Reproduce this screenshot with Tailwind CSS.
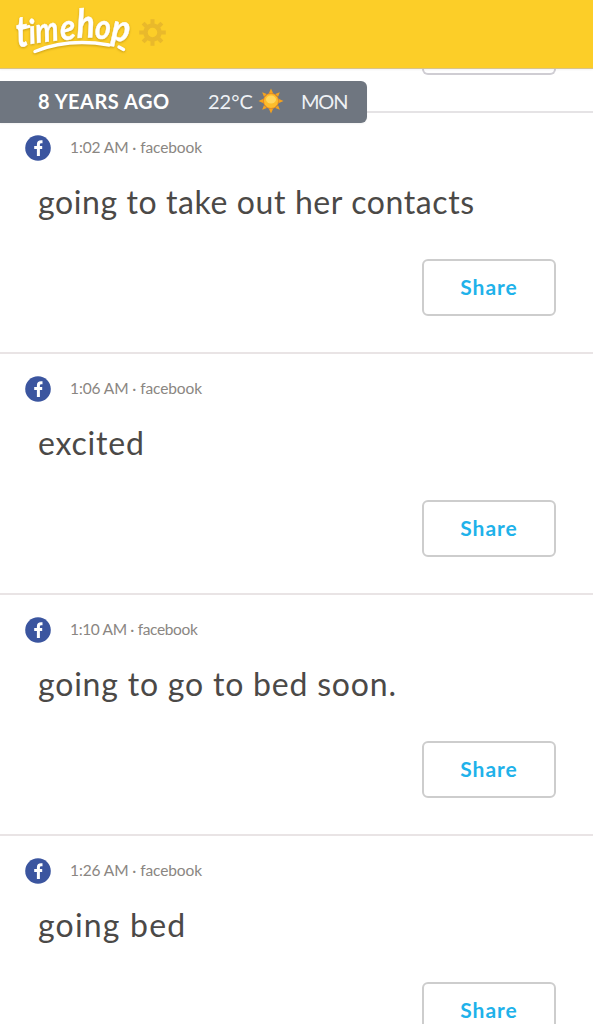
<!doctype html>
<html lang="en">

<head>
  <meta charset="UTF-8" />
  <meta name="viewport" content="width=device-width, initial-scale=1.0" />
  <title>Timehop</title>
  <script src="https://cdn.jsdelivr.net/npm/@tailwindcss/browser@4"></script>
</head>

<body class="bg-white font-['Lato',sans-serif] h-screen overflow-hidden">
  <!-- shared icons -->
  <svg class="hidden">
    <symbol id="fb" viewBox="0 0 26 26">
      <circle cx="13" cy="13" r="12.8" fill="#3b559f" />
      <path d="M17.500 6.700h-1.400c-1.900 0-2.700 1-2.700 2.700V21M9.200 12.600h8" fill="none" stroke="#fff" stroke-width="3" />
    </symbol>
  </svg>

  <header class="relative z-10 h-[69px] bg-[#fcce28] border-b border-[#d9c389] shadow-xs">
    <svg class="block" width="180" height="68" viewBox="0 0 180 68">
      <g class="drop-shadow-[0_1px_1px_rgba(150,110,0,0.5)]">
        <g font-size="32" font-weight="700" font-style="italic" fill="#fff" stroke="#fff" stroke-width=".4">
          <text transform="translate(17.500 47) rotate(-6) scale(1 1.350)">t</text>
          <text transform="translate(30 44) rotate(-7) scale(.9 1.050)">i</text>
          <text transform="translate(36.500 43) rotate(-7) scale(.92 1.080)">m</text>
          <text transform="translate(61 40.500) rotate(-6) scale(1 1.120)">e</text>
          <text transform="translate(77 38) rotate(-2) scale(1.050 1.250)">h</text>
          <text transform="translate(94.500 38.500) rotate(3) scale(.95 1.080)">o</text>
          <text transform="translate(110.500 40) rotate(6) scale(1.080 1.150)">p</text>
        </g>
        <path d="M19 29L29 26.500" fill="none" stroke="#fff" stroke-width="3" stroke-linecap="round" />
        <path d="M35 51.500Q68 38 109 45M119 47L123.500 49.500" fill="none" stroke="#fff" stroke-width="3.5" stroke-linecap="round" />
      </g>
      <g transform="translate(152.500 32.500)" fill="none" stroke="#e9b92b">
        <circle r="7" stroke-width="4.500" />
        <g stroke-width="4">
          <path id="tooth" d="M0-8.500V-13.300" />
          <use href="#tooth" transform="rotate(45)" />
          <use href="#tooth" transform="rotate(90)" />
          <use href="#tooth" transform="rotate(135)" />
          <use href="#tooth" transform="rotate(180)" />
          <use href="#tooth" transform="rotate(225)" />
          <use href="#tooth" transform="rotate(270)" />
          <use href="#tooth" transform="rotate(315)" />
        </g>
      </g>
    </svg>
  </header>

  <main class="relative">
    <!-- year banner, floats over the feed -->
    <div
      class="absolute left-0 top-3 w-[367px] h-[42px] pb-0.5 bg-[#6f7680] rounded-r-md flex items-center text-[20px] text-[#eef1f5] shadow-xs">
      <span class="ml-[38px] w-[170px] font-bold text-white tracking-[0.5px] whitespace-nowrap">8 YEARS AGO</span>
      <span class="w-[50px] whitespace-nowrap">22°C</span>
      <svg width="26" height="26" viewBox="-13 -13 26 26">
        <g fill="#f5a21d">
          <path id="ray" d="M-2-8L0-12.500L2-8z" />
          <use href="#ray" transform="rotate(45)" />
          <use href="#ray" transform="rotate(90)" />
          <use href="#ray" transform="rotate(135)" />
          <use href="#ray" transform="rotate(180)" />
          <use href="#ray" transform="rotate(225)" />
          <use href="#ray" transform="rotate(270)" />
          <use href="#ray" transform="rotate(315)" />
        </g>
        <circle r="7.500" fill="#fdbd2c" stroke="#f08f1f" />
        <ellipse cy="-1.500" rx="5" ry="4" fill="#ffd75e" />
      </svg>
      <span class="ml-[17px] tracking-[-1.2px]">MON</span>
    </div>

    <!-- tail of the previous memory -->
    <div class="h-[44px] border-b-2 border-[#e5e3e5] pr-[37px]">
      <div class="ml-auto w-[134px] h-[6px] border-2 border-t-0 border-[#cfcdd3] rounded-b-md"></div>
    </div>

    <article class="h-[241px] border-b-2 border-[#e9e4e5] pt-[22px] pr-[37px] flex flex-col">
      <div class="flex items-center h-[26px] ml-[25px] text-[15.500px] text-[#8a8682] tracking-[-0.1px]">
        <svg class="mr-[19px]" width="26" height="26"><use href="#fb" /></svg>
        <span>1:02 AM · facebook</span>
      </div>
      <p class="ml-[38px] mt-[21px] h-10 leading-10 text-[32px] text-[#4b4947] tracking-[0.6px] whitespace-nowrap">going to take out her contacts</p>
      <button class="ml-auto mt-[37px] w-[134px] h-[57px] pb-px border-2 border-[#cdcdcd] rounded-md text-[21px] font-bold tracking-[1px] text-[#1fb2ea]">Share</button>
    </article>

    <article class="h-[241px] border-b-2 border-[#e9e4e5] pt-[22px] pr-[37px] flex flex-col">
      <div class="flex items-center h-[26px] ml-[25px] text-[15.500px] text-[#8a8682] tracking-[-0.1px]">
        <svg class="mr-[19px]" width="26" height="26"><use href="#fb" /></svg>
        <span>1:06 AM · facebook</span>
      </div>
      <p class="ml-[38px] mt-[21px] h-10 leading-10 text-[32px] text-[#4b4947] tracking-[0.8px] whitespace-nowrap">excited</p>
      <button class="ml-auto mt-[37px] w-[134px] h-[57px] pb-px border-2 border-[#cdcdcd] rounded-md text-[21px] font-bold tracking-[1px] text-[#1fb2ea]">Share</button>
    </article>

    <article class="h-[241px] border-b-2 border-[#e9e4e5] pt-[22px] pr-[37px] flex flex-col">
      <div class="flex items-center h-[26px] ml-[25px] text-[15.500px] text-[#8a8682] tracking-[-0.35px]">
        <svg class="mr-[19px]" width="26" height="26"><use href="#fb" /></svg>
        <span>1:10 AM · facebook</span>
      </div>
      <p class="ml-[38px] mt-[21px] h-10 leading-10 text-[32px] text-[#4b4947] tracking-[0.8px] whitespace-nowrap">going to go to bed soon.</p>
      <button class="ml-auto mt-[37px] w-[134px] h-[57px] pb-px border-2 border-[#cdcdcd] rounded-md text-[21px] font-bold tracking-[1px] text-[#1fb2ea]">Share</button>
    </article>

    <!-- last visible memory, its button is cut by the screen edge -->
    <article class="h-[189px] overflow-hidden pt-[22px] pr-[37px] flex flex-col">
      <div class="flex items-center h-[26px] ml-[25px] text-[15.500px] text-[#8a8682] tracking-[-0.1px]">
        <svg class="mr-[19px]" width="26" height="26"><use href="#fb" /></svg>
        <span>1:26 AM · facebook</span>
      </div>
      <p class="ml-[38px] mt-[21px] h-10 leading-10 shrink-0 text-[32px] text-[#4b4947] tracking-[1.2px] whitespace-nowrap">going bed</p>
      <button class="ml-auto mt-[37px] w-[134px] h-[57px] pb-px shrink-0 border-2 border-[#cdcdcd] rounded-md text-[21px] font-bold tracking-[1px] text-[#1fb2ea]">Share</button>
    </article>
  </main>
</body>

</html>
